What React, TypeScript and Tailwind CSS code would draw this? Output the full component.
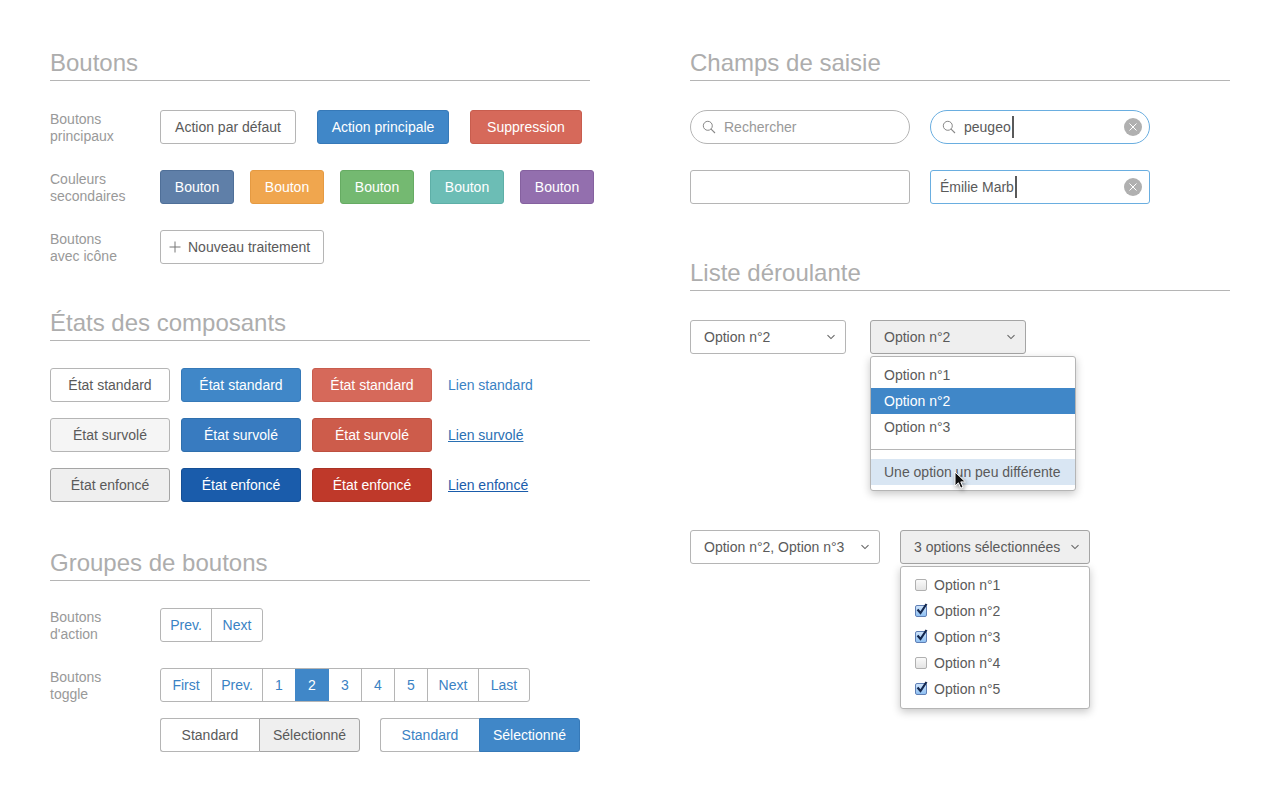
import React from 'react';

const box = 'h-[34px] flex items-center rounded-[3px] border text-[14px] shrink-0';
const btn = `${box} justify-center`;
const plain = 'border-[#b5b5b5] bg-white text-[#5a5a5a]';

function Section({ title, className, children }: { title: string; className?: string; children: React.ReactNode }) {
  return (
    <section className={className}>
      <h2 className="h-[31px] border-b border-[#b5b5b5] text-[24px] leading-[25px] text-[#adadad]">{title}</h2>
      {children}
    </section>
  );
}

function Row({ label, second, children }: { label: string; second: string; children: React.ReactNode }) {
  return (
    <div className="flex">
      <div className="h-[34px] w-[110px] shrink-0 pt-[1px] text-[14px] leading-[17px] text-[#999]">
        {label}
        <br />
        {second}
      </div>
      {children}
    </div>
  );
}

function Chevron() {
  return (
    <svg width="10" height="6" viewBox="0 0 10 6" fill="none" className="shrink-0">
      <path d="M1.5 1.2 5 4.6l3.5-3.4" stroke="#666" strokeWidth="1.1" />
    </svg>
  );
}

function SearchIcon() {
  return (
    <svg width="14" height="14" viewBox="0 0 14 14" fill="none" className="shrink-0">
      <circle cx="5.8" cy="5.8" r="4.5" stroke="#888" strokeWidth="1" />
      <path d="M9.1 9.1 13 13" stroke="#888" strokeWidth="1.1" />
    </svg>
  );
}

function Clear() {
  return (
    <svg width="18" height="18" viewBox="0 0 18 18" className="absolute right-[7px] top-[7px]">
      <circle cx="9" cy="9" r="9" fill="#b0b0b0" />
      <path d="M5.5 5.5l7 7M12.5 5.5l-7 7" stroke="#fff" strokeWidth="1" />
    </svg>
  );
}

function Caret() {
  return <span className="ml-[1px] inline-block h-[22px] w-[2px] bg-[#5a5a5a]" />;
}

function Select({ label, width, open }: { label: string; width: string; open?: boolean }) {
  return (
    <div
      className={`${box} ${width} justify-between pl-[13px] pr-[9px] ${
        open ? 'border-[#a5a5a5] bg-[#efefef] text-[#5a5a5a]' : plain
      }`}
    >
      <span className="whitespace-nowrap">{label}</span>
      <Chevron />
    </div>
  );
}

function Checkbox({ checked }: { checked?: boolean }) {
  if (!checked) {
    return <span className="h-[12px] w-[12px] shrink-0 rounded-[2px] border border-[#b0b0b0] bg-gradient-to-b from-[#fafafa] to-[#e4e4e4]" />;
  }
  return (
    <span className="relative h-[12px] w-[12px] shrink-0 rounded-[2px] border border-[#5f7fb5] bg-gradient-to-b from-[#cfe4fb] to-[#8fc0f2]">
      <svg width="14" height="14" viewBox="0 0 14 14" fill="none" className="absolute left-[-1px] top-[-4px]">
        <path d="M2.5 7.5 5.5 11 11.5 2" stroke="#14284f" strokeWidth="2.2" />
      </svg>
    </span>
  );
}

function Cursor() {
  return (
    <svg width="16" height="20" viewBox="0 0 16 20" className="absolute left-[83px] top-[114px] drop-shadow-[1px_2px_2px_rgba(0,0,0,0.4)]">
      <path d="M1 1v14l3.4-3.2 2.3 5.4 2.4-1-2.3-5.3h4.6z" fill="#111" stroke="#fff" strokeWidth="1" />
    </svg>
  );
}

const secondary = [
  'bg-[#5f7fa8] border-[#4f6f98]',
  'bg-[#f0a64e] border-[#e59a42]',
  'bg-[#74b971] border-[#66ab63]',
  'bg-[#6cbdb5] border-[#5eafa7]',
  'bg-[#936fae] border-[#85619f]',
];

const pages = [
  { label: 'First', w: 'w-[51px]' },
  { label: 'Prev.', w: 'w-[51px]' },
  { label: '1', w: 'w-[33px]' },
  { label: '2', w: 'relative -ml-[1px] w-[34px] border-r-0 bg-[#4087c8] text-white' },
  { label: '3', w: 'w-[33px]' },
  { label: '4', w: 'w-[33px]' },
  { label: '5', w: 'w-[33px]' },
  { label: 'Next', w: 'w-[51px]' },
  { label: 'Last', w: 'w-[50px]' },
];

const checks = [
  { label: 'Option n°1', checked: false },
  { label: 'Option n°2', checked: true },
  { label: 'Option n°3', checked: true },
  { label: 'Option n°4', checked: false },
  { label: 'Option n°5', checked: true },
];

export default function App() {
  return (
    <div
      className="flex h-[800px] w-[1280px] gap-[100px] overflow-hidden bg-white px-[50px] pt-[50px] text-[14px] text-[#5a5a5a]"
      style={{ fontFamily: '"Liberation Sans", Arial, sans-serif' }}
    >
      {/* left column */}
      <div className="w-[540px] shrink-0">
        <Section title="Boutons">
          <div className="mt-[29px] flex flex-col gap-[26px]">
            <Row label="Boutons" second="principaux">
              <div className="flex gap-[21px]">
                <div className={`${btn} ${plain} w-[136px]`}>Action par défaut</div>
                <div className={`${btn} w-[132px] border-[#3679b8] bg-[#4087c8] text-white`}>Action principale</div>
                <div className={`${btn} w-[112px] border-[#c85d4e] bg-[#d6695a] text-white`}>Suppression</div>
              </div>
            </Row>
            <Row label="Couleurs" second="secondaires">
              <div className="flex gap-[16px]">
                {secondary.map((c) => (
                  <div key={c} className={`${btn} w-[74px] text-white ${c}`}>
                    Bouton
                  </div>
                ))}
              </div>
            </Row>
            <Row label="Boutons" second="avec icône">
              <div className={`${box} ${plain} w-[164px] gap-[7px] pl-[8px]`}>
                <svg width="12" height="12" viewBox="0 0 12 12" className="shrink-0">
                  <path d="M6 0.5v11M0.5 6h11" stroke="#777" strokeWidth="1" />
                </svg>
                <span className="whitespace-nowrap">Nouveau traitement</span>
              </div>
            </Row>
          </div>
        </Section>

        <Section title="États des composants" className="mt-[46px]">
          <div className="mt-[27px] flex flex-col gap-[16px]">
            <div className="flex gap-[11px]">
              <div className={`${btn} ${plain} w-[120px]`}>État standard</div>
              <div className={`${btn} w-[120px] border-[#3679b8] bg-[#4087c8] text-white`}>État standard</div>
              <div className={`${btn} w-[120px] border-[#c85d4e] bg-[#d6695a] text-white`}>État standard</div>
              <span className="ml-[5px] self-center text-[#3a82c4]">Lien standard</span>
            </div>
            <div className="flex gap-[11px]">
              <div className={`${btn} w-[120px] border-[#b5b5b5] bg-[#f5f5f5] text-[#5a5a5a]`}>État survolé</div>
              <div className={`${btn} w-[120px] border-[#2f6fad] bg-[#387bc0] text-white`}>État survolé</div>
              <div className={`${btn} w-[120px] border-[#bd5040] bg-[#cd5c4b] text-white`}>État survolé</div>
              <span className="ml-[5px] self-center text-[#2a70b3] underline">Lien survolé</span>
            </div>
            <div className="flex gap-[11px]">
              <div className={`${btn} w-[120px] border-[#a5a5a5] bg-[#efefef] text-[#5a5a5a]`}>État enfoncé</div>
              <div className={`${btn} w-[120px] border-[#154f95] bg-[#1a5cab] text-white`}>État enfoncé</div>
              <div className={`${btn} w-[120px] border-[#a93225] bg-[#bf392a] text-white`}>État enfoncé</div>
              <span className="ml-[5px] self-center text-[#1a5cab] underline">Lien enfoncé</span>
            </div>
          </div>
        </Section>

        <Section title="Groupes de boutons" className="mt-[48px]">
          <div className="mt-[27px] flex flex-col gap-[26px]">
            <Row label="Boutons" second="d'action">
              <div className="flex h-[34px] divide-x divide-[#b5b5b5] rounded-[3px] border border-[#b5b5b5] text-[#3a82c4]">
                <div className="flex w-[51px] items-center justify-center">Prev.</div>
                <div className="flex w-[50px] items-center justify-center">Next</div>
              </div>
            </Row>
            <div className="flex flex-col gap-[16px]">
              <Row label="Boutons" second="toggle">
                <div className="flex h-[34px] divide-x divide-[#b5b5b5] overflow-hidden rounded-[3px] border border-[#b5b5b5] text-[#3a82c4]">
                  {pages.map((p) => (
                    <div key={p.label} className={`flex items-center justify-center ${p.w}`}>
                      {p.label}
                    </div>
                  ))}
                </div>
              </Row>
              <div className="ml-[110px] flex gap-[20px]">
                <div className="flex h-[34px] w-[200px]">
                  <div className="flex w-[99px] items-center justify-center rounded-l-[3px] border border-r-0 border-[#b5b5b5]">Standard</div>
                  <div className="flex w-[101px] items-center justify-center rounded-r-[3px] border border-[#a5a5a5] bg-[#efefef]">Sélectionné</div>
                </div>
                <div className="flex h-[34px] w-[200px]">
                  <div className="flex w-[99px] items-center justify-center rounded-l-[3px] border border-r-0 border-[#b5b5b5] text-[#3a82c4]">Standard</div>
                  <div className="flex w-[101px] items-center justify-center rounded-r-[3px] border border-[#3679b8] bg-[#4087c8] text-white">Sélectionné</div>
                </div>
              </div>
            </div>
          </div>
        </Section>
      </div>

      {/* right column */}
      <div className="w-[540px] shrink-0">
        <Section title="Champs de saisie">
          <div className="mt-[29px] flex flex-col gap-[26px]">
            <div className="flex gap-[20px]">
              <div className="flex h-[34px] w-[220px] items-center gap-[8px] rounded-full border border-[#b5b5b5] pl-[11px] text-[#999]">
                <SearchIcon />
                Rechercher
              </div>
              <div className="relative flex h-[34px] w-[220px] items-center gap-[8px] rounded-full border border-[#6aaee0] pl-[11px] text-[#5a5a5a]">
                <SearchIcon />
                <span className="flex items-center">peugeo<Caret /></span>
                <Clear />
              </div>
            </div>
            <div className="flex gap-[20px]">
              <div className="h-[34px] w-[220px] rounded-[3px] border border-[#b5b5b5]" />
              <div className="relative flex h-[34px] w-[220px] items-center rounded-[3px] border border-[#6aaee0] pl-[9px]">
                <span className="flex items-center">Émilie Marb<Caret /></span>
                <Clear />
              </div>
            </div>
          </div>
        </Section>

        <Section title="Liste déroulante" className="mt-[56px]">
          <div className="mt-[29px] flex gap-[24px]">
            <Select label="Option n°2" width="w-[156px]" />
            <div className="relative">
              <Select label="Option n°2" width="w-[156px]" open />
              <div className="absolute left-0 top-[36px] w-[206px] rounded-[3px] border border-[#b5b5b5] bg-white py-[5px] shadow-[0_3px_8px_rgba(0,0,0,0.22)]">
                <div className="flex h-[26px] items-center pl-[13px]">Option n°1</div>
                <div className="flex h-[26px] items-center bg-[#4087c8] pl-[13px] text-white">Option n°2</div>
                <div className="flex h-[26px] items-center pl-[13px]">Option n°3</div>
                <div className="my-[9px] border-t border-[#b5b5b5]" />
                <div className="flex h-[26px] items-center whitespace-nowrap bg-[#d9e6f3] pl-[13px]">Une option un peu différente</div>
                <Cursor />
              </div>
            </div>
          </div>

          <div className="mt-[176px] flex gap-[20px]">
            <Select label="Option n°2, Option n°3" width="w-[190px]" />
            <div className="relative">
              <Select label="3 options sélectionnées" width="w-[190px]" open />
              <div className="absolute left-0 top-[36px] w-[190px] rounded-[3px] border border-[#b5b5b5] bg-white pb-[6px] pt-[5px] shadow-[0_3px_8px_rgba(0,0,0,0.22)]">
                {checks.map((c) => (
                  <div key={c.label} className="flex h-[26px] items-center gap-[7px] pl-[14px]">
                    <Checkbox checked={c.checked} />
                    {c.label}
                  </div>
                ))}
              </div>
            </div>
          </div>
        </Section>
      </div>
    </div>
  );
}
